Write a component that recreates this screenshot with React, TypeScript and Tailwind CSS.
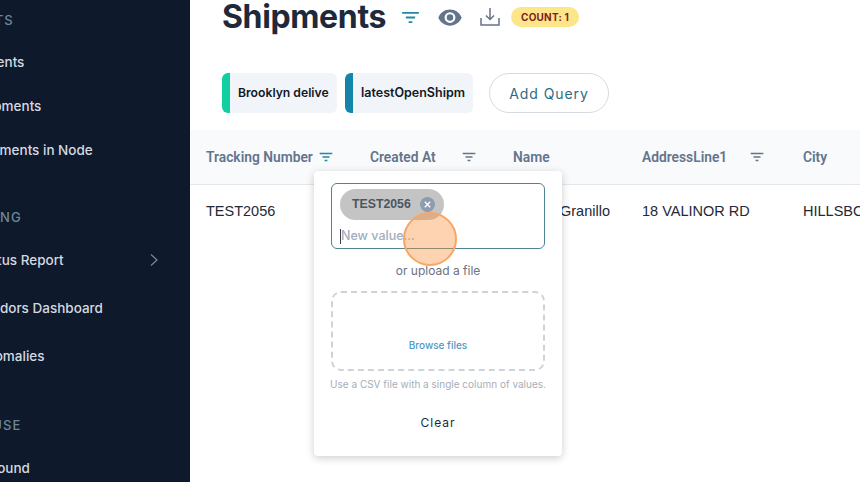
import React from "react";

const Filter = ({ className }: { className: string }) => (
  <svg viewBox="0 0 20 14" fill="none" stroke="currentColor" strokeWidth="2" className={className}>
    <path d="M1 2h18M5 7h10M8 12h4" />
  </svg>
);

const NavHead = ({ t, cls }: { t: string; cls: string }) => (
  <div className={`text-[13px] font-medium tracking-[1px] text-[#6d8799] whitespace-nowrap ${cls}`}>{t}</div>
);
const NavItem = ({ t, cls }: { t: string; cls: string }) => (
  <div className={`text-[13.5px] font-medium text-[#d4d9e0] whitespace-nowrap ${cls}`}>{t}</div>
);

export default function App() {
  return (
    <div className="relative flex w-[860px] h-[482px] overflow-hidden bg-white font-['Inter',sans-serif]">
      <aside className="w-[190px] h-full shrink-0 overflow-hidden bg-[#0e192b] flex flex-col font-['Inter',sans-serif]">
        <NavHead t="ALERTS" cls="-ml-[42px] mt-[12px] leading-[16px]" />
        <NavItem t="Shipments" cls="-ml-[44px] mt-[24px] leading-[20px]" />
        <NavItem t="Shipments" cls="-ml-[27px] mt-[24px] leading-[20px]" />
        <NavItem t="Shipments in Node" cls="-ml-[29px] mt-[24px] leading-[20px]" />
        <NavHead t="PLANNING" cls="-ml-[54px] mt-[49px] leading-[16px]" />
        <div className="flex items-center justify-between mt-[25px] pr-[31px]">
          <NavItem t="Status Report" cls="-ml-[24px] leading-[20px]" />
          <svg viewBox="0 0 10 14" fill="none" stroke="#7b8899" strokeWidth="1.2" className="w-[10px] h-[14px]">
            <path d="M2 1.5l6 5.5-6 5.5" />
          </svg>
        </div>
        <NavItem t="Vendors Dashboard" cls="-ml-[25px] mt-[28px] leading-[20px]" />
        <NavItem t="Anomalies" cls="-ml-[23px] mt-[28px] leading-[20px]" />
        <NavHead t="WAREHOUSE" cls="-ml-[71px] mt-[49px] leading-[20px]" />
        <NavItem t="Inbound" cls="-ml-[23px] mt-[23px] leading-[20px]" />
      </aside>

      <main className="flex-1 min-w-0 flex flex-col">
        <div className="flex items-center h-[34px] pl-[32px]">
          <h1 className="text-[32px] leading-[34px] font-bold text-[#1e293b] tracking-[-0.36px]">Shipments</h1>
          <Filter className="w-[19px] h-[13px] ml-[15px] text-[#1f8ba3]" />
          <svg viewBox="0 0 24 24" fill="#64748b" className="w-[26px] h-[26px] ml-[17px]">
            <path d="M12 5C7 5 2.9 8.1 1.2 12.5 2.9 16.900 7 20 12 20s9.100-3.100 10.800-7.500C21.100 8.100 17 5 12 5zm0 12.500a5 5 0 110-10 5 5 0 010 10zm0-8a3 3 0 100 6 3 3 0 000-6z" />
          </svg>
          <svg viewBox="0 0 20 20" fill="none" stroke="#64748b" strokeWidth="1.500" className="w-[20px] h-[20px] ml-[17px]">
            <path d="M1 11v7h18v-7M10 1v11M6 8.500l4 4 4-4" />
          </svg>
          <div className="ml-[11px] h-[20px] px-[10px] rounded-full bg-[#fde68a] text-[#7f1d1d] text-[10px] font-bold flex items-center tracking-[0.2px]">COUNT: 1</div>
        </div>

        <div className="flex items-center pl-[32px] mt-[39px] gap-[8px]">
          <div className="h-[40px] w-[115px] rounded-[6px] bg-[#f1f5f9] border-l-[8px] border-[#10cfa0] flex items-center pl-[8px] overflow-hidden">
            <span className="text-[12.2px] font-semibold text-[#111827] whitespace-nowrap font-['Inter',sans-serif] mt-[1px]">Brooklyn delive</span>
          </div>
          <div className="h-[40px] w-[128px] rounded-[6px] bg-[#f1f5f9] border-l-[8px] border-[#1285a8] flex items-center pl-[8px] overflow-hidden">
            <span className="text-[12.5px] font-semibold text-[#111827] whitespace-nowrap font-['Inter',sans-serif] mt-[1px]">latestOpenShipm</span>
          </div>
          <button className="ml-[8px] h-[40px] w-[120px] rounded-full border border-[#d5dbe1] text-[14px] tracking-[0.9px] text-[#2f6b80] font-['Inter',sans-serif] font-normal">Add Query</button>
        </div>

        <div className="mt-[17px] h-[55px] shrink-0 bg-[#f8fafc] border-b border-[#e5e7eb] grid grid-cols-[164px_143px_129px_161px_1fr] items-center pl-[16px] font-['Roboto',sans-serif] text-[13.8px] font-semibold text-[#64748b]">
          <div className="flex items-center gap-[6px]">Tracking Number <Filter className="w-[14px] h-[10px] text-[#1f8ba3]" /></div>
          <div className="flex items-center">Created At <Filter className="w-[14px] h-[10px] ml-[26px] text-[#64748b]" /></div>
          <div>Name</div>
          <div className="flex items-center">AddressLine1 <Filter className="w-[14px] h-[10px] ml-[23px] text-[#64748b]" /></div>
          <div>City</div>
        </div>

        <div className="h-[53px] grid grid-cols-[164px_143px_129px_161px_1fr] items-center pl-[16px] font-['Liberation_Sans',sans-serif] text-[14.5px] text-[#1f2937] whitespace-nowrap">
          <div>TEST2056</div>
          <div></div>
          <div className="pl-[47px]">Granillo</div>
          <div>18 VALINOR RD</div>
          <div className="overflow-hidden">HILLSBOROUGH</div>
        </div>
      </main>

      <div className="absolute left-[314px] top-[171px] w-[248px] h-[285px] bg-white rounded-[4px] shadow-[0_2px_8px_rgba(0,0,0,0.2)] pl-[17px] pr-[17px] pt-[12px] flex flex-col items-center font-['Inter',sans-serif]">
        <div className="w-full h-[66px] rounded-[6px] border border-[#4f8590] pl-[8px] pt-[5px] shrink-0">
          <div className="inline-flex items-center h-[31px] rounded-full bg-[#c4c4c4] pl-[12px] pr-[9px] gap-[9px] font-['Liberation_Sans',sans-serif] text-[12.3px] font-bold text-[#4b5563]">
            TEST2056
            <span className="w-[15px] h-[15px] rounded-full bg-[#8f9bb0] flex items-center justify-center">
              <svg viewBox="0 0 10 10" stroke="white" strokeWidth="1.500" className="w-[9px] h-[9px]"><path d="M2 2l6 6M8 2l-6 6" /></svg>
            </span>
          </div>
          <div className="flex items-center h-[20px] mt-[6px] text-[12.5px] text-[#a3adbb] font-medium">
            <span className="w-px h-[15px] bg-[#374151]" />New value...
          </div>
        </div>
        <div className="mt-[14px] text-[12px] leading-[16px] text-[#6b7280]">or upload a file</div>
        <div className="mt-[12px] w-full h-[80px] shrink-0 rounded-[10px] border-2 border-dashed border-[#cfd3d8] flex items-end justify-center pb-[19px] text-[10px] font-medium text-[#4b9bc4]">
          <span className="mb-[-3px]">Browse files</span>
        </div>
        <div className="mt-[7px] text-[10px] leading-[12px] text-[#a7adb8] whitespace-nowrap">Use a CSV file with a single column of values.</div>
        <div className="mt-[24px] text-[12px] tracking-[1px] text-[#1f2937] font-['Inter',sans-serif]">Clear</div>
      </div>

      <div className="absolute left-[403px] top-[212px] w-[54px] h-[54px] rounded-full bg-[#fb923c]/40 border-2 border-[#f6a765]" />
    </div>
  );
}
